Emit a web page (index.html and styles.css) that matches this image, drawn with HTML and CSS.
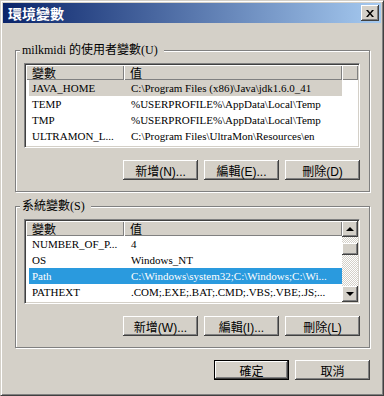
FILE: index.html
```html
<!DOCTYPE html>
<html lang="zh-Hant">
<head>
    <meta charset="UTF-8">
    <title>環境變數</title>
    <link rel="stylesheet" href="styles.css">
</head>
<body>
    <div class="window">
        <div class="titlebar">
            <span class="title">環境變數</span>
            <button class="close" type="button">
                <svg width="8" height="7" viewBox="0 0 8 7"><path d="M0 0h2l2 2.5L6 0h2L5 3.5 8 7H6L4 4.5 2 7H0l3-3.5z" fill="#000"/></svg>
            </button>
        </div>

        <div class="content">
            <fieldset class="group">
                <legend>milkmidi 的使用者變數(U)</legend>
                <div class="listview">
                    <div class="lv-main">
                        <div class="lv-header">
                            <div class="hcell c1">變數</div>
                            <div class="hcell c2">值</div>
                            <div class="hcell rest"></div>
                        </div>
                        <div class="row hover"><span class="c1">JAVA_HOME</span><span class="c2">C:\Program Files (x86)\Java\jdk1.6.0_41</span></div>
                        <div class="row"><span class="c1">TEMP</span><span class="c2">%USERPROFILE%\AppData\Local\Temp</span></div>
                        <div class="row"><span class="c1">TMP</span><span class="c2">%USERPROFILE%\AppData\Local\Temp</span></div>
                        <div class="row"><span class="c1">ULTRAMON_L...</span><span class="c2">C:\Program Files\UltraMon\Resources\en</span></div>
                    </div>
                </div>
                <div class="btn-row">
                    <button class="btn" type="button">新增(N)...</button>
                    <button class="btn" type="button">編輯(E)...</button>
                    <button class="btn" type="button">刪除(D)</button>
                </div>
            </fieldset>

            <fieldset class="group system">
                <legend>系統變數(S)</legend>
                <div class="listview">
                    <div class="lv-main">
                        <div class="lv-header">
                            <div class="hcell c1">變數</div>
                            <div class="hcell c2">值</div>
                        </div>
                        <div class="row"><span class="c1">NUMBER_OF_P...</span><span class="c2">4</span></div>
                        <div class="row"><span class="c1">OS</span><span class="c2">Windows_NT</span></div>
                        <div class="row selected"><span class="c1">Path</span><span class="c2">C:\Windows\system32;C:\Windows;C:\Wi...</span></div>
                        <div class="row"><span class="c1">PATHEXT</span><span class="c2">.COM;.EXE;.BAT;.CMD;.VBS;.VBE;.JS;...</span></div>
                    </div>
                    <div class="scrollbar">
                        <div class="sb-btn"><span class="arrow up"></span></div>
                        <div class="sb-track"><div class="sb-thumb"></div></div>
                        <div class="sb-btn"><span class="arrow down"></span></div>
                    </div>
                </div>
                <div class="btn-row">
                    <button class="btn" type="button">新增(W)...</button>
                    <button class="btn" type="button">編輯(I)...</button>
                    <button class="btn" type="button">刪除(L)</button>
                </div>
            </fieldset>

            <div class="dialog-buttons">
                <button class="btn default" type="button">確定</button>
                <button class="btn" type="button">取消</button>
            </div>
        </div>
    </div>
</body>
</html>
```

FILE: styles.css
```css
/* Reset */
* {
    box-sizing: border-box;
}

body {
    margin: 0;
    background: #d4d0c8;
    font: 12px "Liberation Serif", "Noto Sans CJK TC", serif;
    color: #000;
}

/* Window frame */
.window {
    width: 384px;
    height: 396px;
    padding: 2px;
    background: #d4d0c8;
    border: 1px solid;
    border-color: #d4d0c8 #404040 #404040 #d4d0c8;
    box-shadow: inset 1px 1px #fff, inset -1px -1px #808080;
}

.titlebar {
    height: 20px;
    display: flex;
    align-items: center;
    justify-content: space-between;
    padding: 0 2px 0 5px;
    background: linear-gradient(to right, #0a246a, #a6caf0);
}

.title {
    color: #fff;
    font: bold 14px "Noto Sans CJK TC", sans-serif;
    line-height: 20px;
}

.close {
    width: 18px;
    height: 16px;
    padding: 0;
    border: 0;
    background: #d4d0c8;
    display: flex;
    align-items: center;
    justify-content: center;
    box-shadow: inset -1px -1px #404040, inset 1px 1px #fff, inset -2px -2px #808080;
}

.content {
    padding: 20px 11px 0 12px;
}

/* Group boxes */
.group {
    margin: 0;
    padding: 6px 9px 11px 8px;
    border: 1px solid #808080;
    box-shadow: inset 1px 1px #fff, 1px 1px #fff;
}

.group legend {
    margin-left: -4px;
    padding: 0 6px 0 2px;
    line-height: 14px;
    background: #d4d0c8;
}

.system {
    margin-top: 7px;
}

/* List views */
.listview {
    height: 85px;
    display: flex;
    background: #fff;
    border: 1px solid;
    border-color: #808080 #fff #fff #808080;
    box-shadow: inset 1px 1px #404040, inset -1px -1px #d4d0c8;
    padding: 1px;
}

.lv-main {
    flex: 1;
    overflow: hidden;
}

.lv-header {
    display: flex;
    height: 15px;
}

.hcell {
    height: 15px;
    background: #d4d0c8;
    box-shadow: inset 1px 1px #fff, inset -1px -1px #808080;
    padding-left: 6px;
    line-height: 15px;
    font-family: "Noto Sans CJK TC", sans-serif;
}

.hcell.c1 {
    width: 98px;
}

.hcell.c2 {
    width: 218px;
}

.hcell.rest {
    flex: 1;
    padding: 0;
}

.row {
    display: flex;
    height: 16px;
    line-height: 16px;
    margin-left: 3px;
    width: 313px;
    white-space: nowrap;
    font-size: 11px;
}

.row .c1 {
    width: 95px;
    padding-left: 3px;
    overflow: hidden;
}

.row .c2 {
    width: 218px;
    padding-left: 7px;
    overflow: hidden;
}

.row.hover {
    background: #d4d0c8;
}

.row.selected {
    background: #2a9ade;
    color: #fff;
}

/* Scroll bar */
.scrollbar {
    width: 16px;
    display: flex;
    flex-direction: column;
}

.sb-btn,
.sb-thumb {
    height: 16px;
    background: #d4d0c8;
    box-shadow: inset -1px -1px #404040, inset 1px 1px #fff, inset -2px -2px #808080;
    display: flex;
    align-items: center;
    justify-content: center;
}

.sb-track {
    flex: 1;
    background-image: conic-gradient(#fff 25%, #d4d0c8 0 50%, #fff 0 75%, #d4d0c8 0);
    background-size: 2px 2px;
}

.sb-thumb {
    height: 12px;
    margin-top: 6px;
}

.arrow {
    width: 0;
    height: 0;
    border-left: 4px solid transparent;
    border-right: 4px solid transparent;
}

.arrow.up {
    border-bottom: 4px solid #000;
}

.arrow.down {
    border-top: 4px solid #000;
}

/* Buttons */
.btn-row,
.dialog-buttons {
    display: flex;
    justify-content: flex-end;
    gap: 6px;
    margin-top: 12px;
}

.btn {
    width: 75px;
    height: 20px;
    padding: 0;
    border: 0;
    background: #d4d0c8;
    font: 12px "Liberation Sans", "Noto Sans CJK TC", sans-serif;
    color: #000;
    box-shadow: inset -1px -1px #404040, inset 1px 1px #fff, inset -2px -2px #808080;
}

.btn.default {
    border: 1px solid #000;
}
```
